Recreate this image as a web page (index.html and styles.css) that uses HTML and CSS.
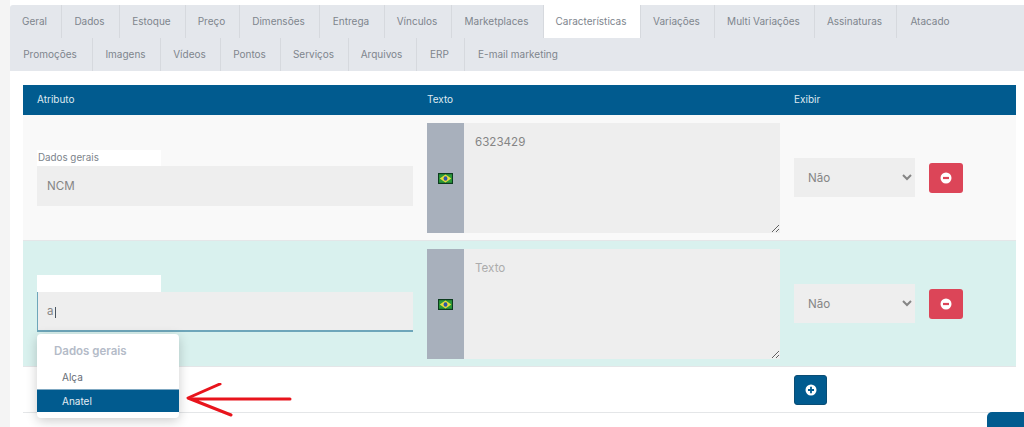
FILE: index.html
```html
<!DOCTYPE html>
<html lang="pt-BR">
<head>
<meta charset="utf-8">
<title>Características</title>
<link rel="stylesheet" href="styles.css">
</head>
<body>
<main class="page">
  <nav class="tabs">
    <div class="tab-row">
      <a class="tab w52">Geral</a><a class="tab w58">Dados</a><a class="tab w66">Estoque</a><a class="tab w54">Preço</a><a class="tab w80">Dimensões</a><a class="tab w65">Entrega</a><a class="tab w67">Vínculos</a><a class="tab w92">Marketplaces</a><a class="tab w97 active">Características</a><a class="tab w74">Variações</a><a class="tab w100">Multi Variações</a><a class="tab w82">Assinaturas</a><a class="tab plain w68">Atacado</a>
    </div>
    <div class="tab-row">
      <a class="tab w83">Promoções</a><a class="tab w68">Imagens</a><a class="tab w60">Vídeos</a><a class="tab w60">Pontos</a><a class="tab w68">Serviços</a><a class="tab w68">Arquivos</a><a class="tab w48">ERP</a><a class="tab plain wide">E-mail marketing</a>
    </div>
  </nav>

  <section class="attr-table">
    <div class="grid head">
      <div class="head-first">Atributo</div>
      <div>Texto</div>
      <div>Exibir</div>
    </div>

    <div class="grid row row-gray">
      <div class="attr">
        <div class="group-label">Dados gerais</div>
        <input class="attr-input" type="text" value="NCM">
      </div>
      <div class="text-cell">
        <span class="flag-box">
          <svg class="flag" viewBox="0 0 14 9" preserveAspectRatio="none"><rect width="14" height="9" fill="#0d3b1e"/><rect x="1" y="1" width="12" height="7" fill="#2c9a3a"/><path d="M7 1.200 12.400 4.500 7 7.800 1.600 4.500z" fill="#e8dc3a"/><circle cx="7" cy="4.500" r="1.800" fill="#2f55a8"/></svg>
        </span>
        <textarea class="text-area">6323429</textarea>
      </div>
      <div class="show-cell">
        <select class="show-select"><option>Não</option><option>Sim</option></select>
        <button class="icon-btn danger" type="button" aria-label="Remover">
          <svg viewBox="0 0 12 12"><circle cx="6" cy="6" r="5.500" fill="#fff"/><rect x="3" y="4.900" width="6" height="2.200" fill="#dc4558"/></svg>
        </button>
      </div>
    </div>

    <div class="grid row row-green">
      <div class="attr">
        <div class="group-label"></div>
        <input class="attr-input focused" type="text" value="a">
        <span class="caret"></span>
        <div class="menu">
          <div class="menu-title">Dados gerais</div>
          <div class="menu-item">Alça</div>
          <div class="menu-item selected">Anatel</div>
        </div>
      </div>
      <div class="text-cell">
        <span class="flag-box">
          <svg class="flag" viewBox="0 0 14 9" preserveAspectRatio="none"><rect width="14" height="9" fill="#0d3b1e"/><rect x="1" y="1" width="12" height="7" fill="#2c9a3a"/><path d="M7 1.200 12.400 4.500 7 7.800 1.600 4.500z" fill="#e8dc3a"/><circle cx="7" cy="4.500" r="1.800" fill="#2f55a8"/></svg>
        </span>
        <textarea class="text-area" placeholder="Texto"></textarea>
      </div>
      <div class="show-cell">
        <select class="show-select"><option>Não</option><option>Sim</option></select>
        <button class="icon-btn danger" type="button" aria-label="Remover">
          <svg viewBox="0 0 12 12"><circle cx="6" cy="6" r="5.500" fill="#fff"/><rect x="3" y="4.900" width="6" height="2.200" fill="#dc4558"/></svg>
        </button>
      </div>
    </div>

    <div class="grid row-add">
      <div></div>
      <div></div>
      <div>
        <button class="icon-btn primary" type="button" aria-label="Adicionar">
          <svg viewBox="0 0 12 12"><circle cx="6" cy="6" r="5.500" fill="#fff"/><path d="M3 4.900h2.100V2.800h1.800v2.100H9v2.200H6.900v2.100H5.100V7.100H3z" fill="#015b8f"/></svg>
        </button>
      </div>
    </div>
  </section>

  <svg class="arrow" viewBox="0 0 110 40" aria-hidden="true">
    <path d="M105 16H8M35 1 3 15l43 17" fill="none" stroke="#e8141c" stroke-width="3" stroke-linecap="round" stroke-linejoin="round"/>
  </svg>
  <div class="corner-btn"></div>
</main>
</body>
</html>
```
FILE: styles.css
```css
* { box-sizing: border-box; }
html, body { margin: 0; height: 100%; overflow: hidden; }
body {
  background: #f4f4f4;
  font-family: "Inter", "Roboto", sans-serif;
  font-size: 10px;
  color: #7c838b;
}
.page {
  position: relative;
  margin-left: 10px;
  height: 427px;
  padding-top: 5px;
  background: #fff;
}
.tabs {
  height: 66px;
  background: #e4e7ec;
  border-top-left-radius: 3px;
}
.tab-row { display: flex; height: 33px; }
.tab {
  display: flex;
  align-items: center;
  justify-content: center;
  height: 33px;
  padding: 0 2px 1px 0;
  border-right: 1px solid #d6d9de;
  color: #7e858d;
  white-space: nowrap;
}
.tab.plain { border-right: 0; }
.tab.active { background: #fff; }
.w48 { width: 48px; } .w52 { width: 52px; } .w54 { width: 54px; }
.w58 { width: 58px; } .w60 { width: 60px; } .w65 { width: 65px; }
.w66 { width: 66px; } .w67 { width: 67px; } .w68 { width: 68px; }
.w74 { width: 74px; } .w80 { width: 80px; } .w82 { width: 82px; }
.w83 { width: 83px; } .w92 { width: 92px; } .w97 { width: 97px; }
.w100 { width: 100px; } .wide { width: 108px; }

.attr-table { margin: 14px 8px 0 13px; }
.grid { display: grid; grid-template-columns: 404px 367px 1fr; }
.head {
  height: 30px;
  align-items: center;
  background: #015b8f;
  color: #dfe9f0;
  padding-bottom: 2px;
}
.head-first { padding-left: 14px; }
.row { height: 126px; align-items: center; border-bottom: 1px solid #e4e6e8; padding-top: 1px; }
.row-gray { background: #f9f9f9; }
.row-green { background: #d9f1ee; }
.attr { position: relative; padding-left: 14px; }
.group-label {
  width: 124px;
  height: 16px;
  padding-left: 1px;
  background: #fff;
  line-height: 15px;
  font-size: 9.8px;
  color: #7c838b;
}
.row-green .group-label { height: 17px; margin-top: -1px; }
.attr-input {
  display: block;
  width: 376px;
  height: 40px;
  padding: 0 10px;
  border: 0;
  background: #eee;
  color: #858585;
  font: 11.6px "Inter", "Roboto", sans-serif;
  outline: 0;
}
.attr-input.focused {
  border-left: 1px solid #6ea6ba;
  border-bottom: 2px solid #6ea6ba;
  padding-left: 9px;
}
.caret {
  position: absolute;
  left: 32px;
  top: 31px;
  width: 1px;
  height: 11px;
  background: #4a5560;
}
.text-cell { display: flex; height: 110px; }
.flag-box {
  display: flex;
  align-items: center;
  justify-content: center;
  width: 37px;
  background: #a8b0bc;
}
.flag { width: 15px; height: 11px; }
.text-area {
  width: 316px;
  height: 110px;
  padding: 12px 11px;
  border: 0;
  background: #eee;
  color: #858585;
  font: 11.6px "Inter", "Roboto", sans-serif;
  outline: 0;
}
.text-area::placeholder { color: #acacac; }
.show-cell { display: flex; align-items: center; gap: 14px; }
.show-select {
  width: 121px;
  height: 39px;
  margin-bottom: 1px;
  padding: 0 10px;
  border: 0;
  background-color: #eee;
  color: #858585;
  font: 11.6px "Inter", "Roboto", sans-serif;
  outline: 0;
}
.icon-btn {
  display: flex;
  align-items: center;
  justify-content: center;
  height: 30px;
  padding: 0;
  border: 1px solid transparent;
  border-radius: 3px;
}
.icon-btn svg { width: 12px; height: 12px; }
.danger { width: 34px; background: #dc4558; }
.primary { width: 33px; background: #015b8f; border-color: #0a4d75; }
.row-add { height: 46px; padding-top: 8px; border-bottom: 1px solid #e4e6e8; }

.menu {
  position: absolute;
  left: 14px;
  top: 100%;
  z-index: 2;
  width: 142px;
  height: 84px;
  margin-top: 2px;
  padding-top: 9px;
  background: #fff;
  border-radius: 4px;
  box-shadow: 0 3px 12px rgba(0, 0, 0, .2);
}
.menu-title {
  height: 23px;
  padding-left: 17px;
  font-weight: 600;
  font-size: 11.5px;
  line-height: 16px;
  color: #b4bbc8;
}
.menu-item { height: 23px; padding-left: 25px; line-height: 22px; color: #666d75; }
.menu-item.selected { background: #015b8f; color: #e4edf3; border-top: 1px solid #7fa8c2; }
.arrow {
  position: absolute;
  left: 175px;
  top: 383px;
  width: 110px;
  height: 40px;
  z-index: 3;
}
.corner-btn {
  position: absolute;
  right: 0;
  bottom: 0;
  width: 37px;
  height: 15px;
  background: #015b8f;
  border-top-left-radius: 5px;
}
```
